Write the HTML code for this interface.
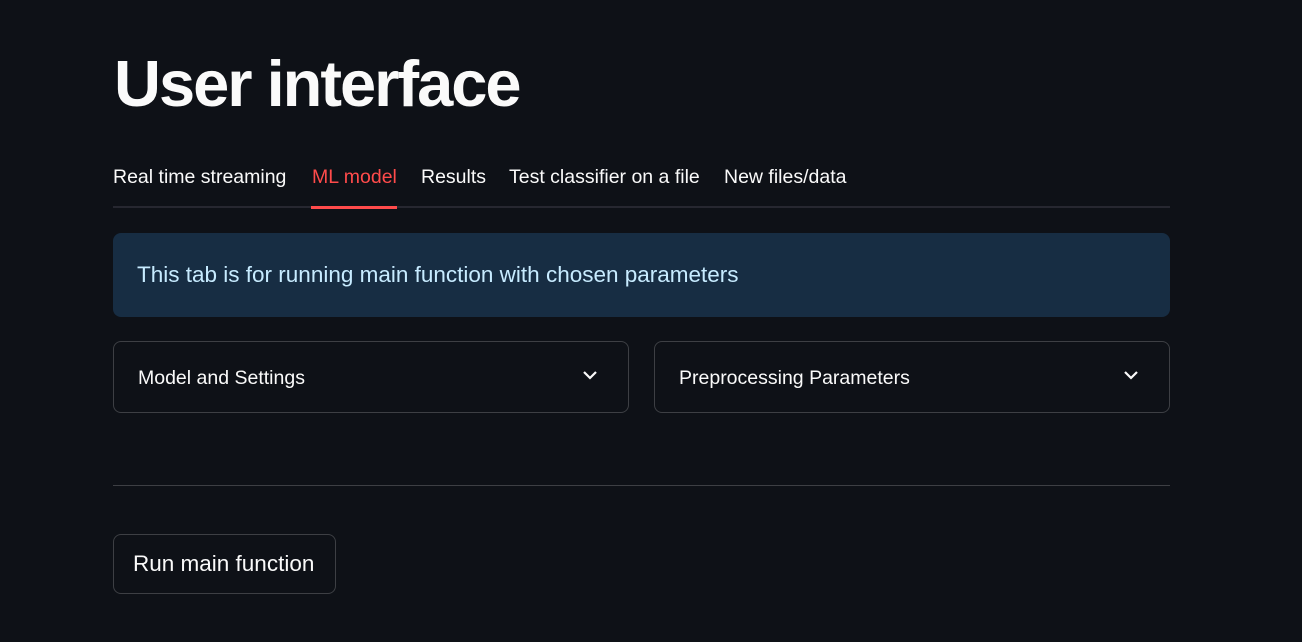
<!DOCTYPE html>
<html><head><meta charset="utf-8"><style>
html,body{margin:0;padding:0;background:#0e1117;width:1302px;height:642px;overflow:hidden;font-family:"Liberation Sans",sans-serif;color:#fafafa}
.a{position:absolute;white-space:nowrap}
h1{position:absolute;left:114px;top:44px;margin:0;font-size:65px;font-weight:700;letter-spacing:-2px;line-height:80px}
.tab{position:absolute;top:165px;font-size:19.5px;line-height:24px}
.line{position:absolute;left:113px;top:206px;width:1057px;height:2px;background:#262730}
.red{position:absolute;left:311px;top:206px;width:86px;height:3px;background:#ff4b4b}
.info{position:absolute;left:113px;top:233px;width:1057px;height:84px;background:#172d43;border-radius:8px}
.info span{position:absolute;left:24px;top:29px;font-size:22.5px;color:#c7ebff;line-height:26px}
.exp{position:absolute;top:341px;width:514px;height:70px;border:1px solid rgba(250,250,250,0.2);border-radius:8px}
.exp span{position:absolute;left:24px;top:24px;font-size:19.5px;line-height:24px}
.exp svg{position:absolute;left:468px;top:27px}
.hr{position:absolute;left:113px;top:485px;width:1057px;height:1px;background:rgba(250,250,250,0.2)}
.btn{position:absolute;left:113px;top:534px;width:221px;height:58px;border:1px solid rgba(250,250,250,0.2);border-radius:8px}
.btn span{position:absolute;left:19px;top:16px;font-size:22.5px;line-height:26px}
</style></head><body>
<h1>User interface</h1>
<div class="tab a" style="left:113px">Real time streaming</div>
<div class="tab a" style="left:312px;color:#ff4b4b">ML model</div>
<div class="tab a" style="left:421px">Results</div>
<div class="tab a" style="left:509px">Test classifier on a file</div>
<div class="tab a" style="left:724px">New files/data</div>
<div class="line"></div><div class="red"></div>
<div class="info"><span class="a">This tab is for running main function with chosen parameters</span></div>
<div class="exp" style="left:113px"><span class="a">Model and Settings</span><svg width="16" height="12" viewBox="0 0 16 12"><path d="M2 3 L8 9 L14 3" fill="none" stroke="#fafafa" stroke-width="2.2"/></svg></div>
<div class="exp" style="left:654px"><span class="a">Preprocessing Parameters</span><svg width="16" height="12" viewBox="0 0 16 12"><path d="M2 3 L8 9 L14 3" fill="none" stroke="#fafafa" stroke-width="2.2"/></svg></div>
<div class="hr"></div>
<div class="btn"><span class="a">Run main function</span></div>
</body></html>
